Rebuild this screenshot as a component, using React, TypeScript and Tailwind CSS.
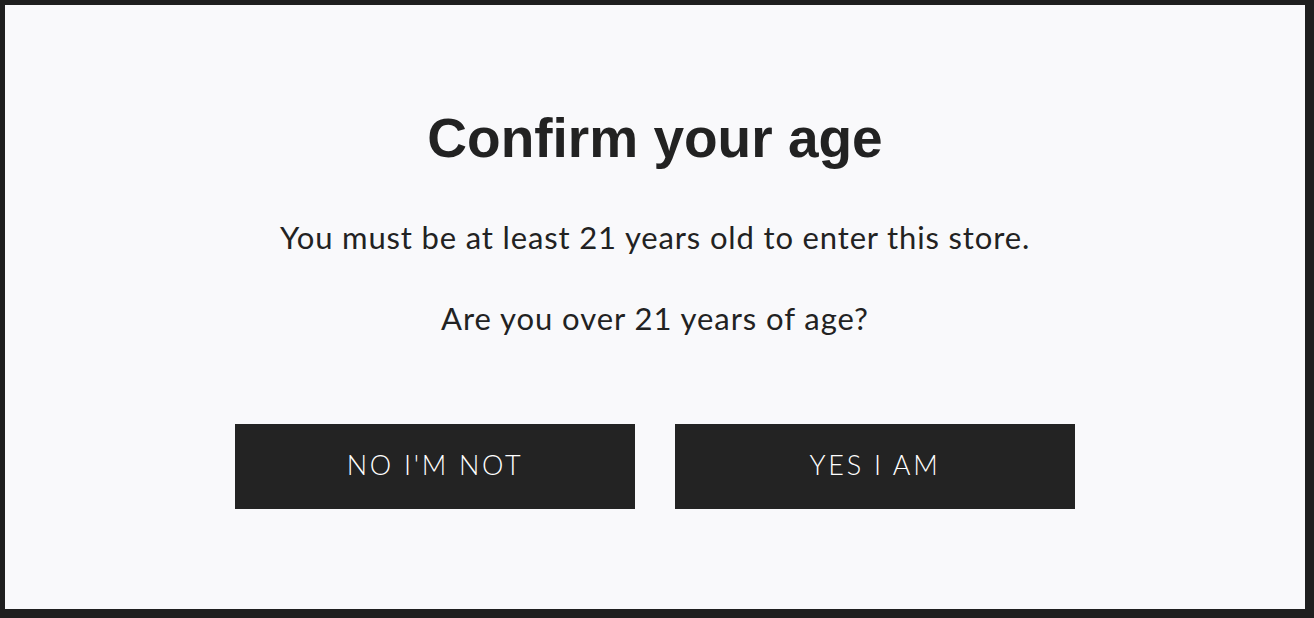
export default function App() {
  return (
    <div className="h-[618px] w-[1314px] bg-[#1f1f1f] pt-[5px] pl-[5px]">
      <div className="flex h-[604px] w-[1300px] flex-col items-center bg-[#f9f9fb] pt-[100px] text-[#222222]">
        <h1 className="font-['Liberation_Sans',Arial,sans-serif] text-[55px] leading-[66px] font-bold">
          Confirm your age
        </h1>
        <p className="mt-[46px] font-['Lato',sans-serif] text-[31px] leading-[40px] tracking-[0.85px]">
          You must be at least 21 years old to enter this store.
        </p>
        <p className="mt-[41px] font-['Lato',sans-serif] text-[31px] leading-[40px] tracking-[0.95px]">
          Are you over 21 years of age?
        </p>
        <div className="mt-[86px] flex gap-10">
          <button className="flex h-[85px] w-[400px] items-center justify-center bg-[#232323] pb-[3px] font-['Lato',sans-serif] text-[27px] font-light tracking-[0.1em] text-white">
            NO I'M NOT
          </button>
          <button className="flex h-[85px] w-[400px] items-center justify-center bg-[#232323] pb-[3px] font-['Lato',sans-serif] text-[27px] font-light tracking-[0.1em] text-white">
            YES I AM
          </button>
        </div>
      </div>
    </div>
  )
}
